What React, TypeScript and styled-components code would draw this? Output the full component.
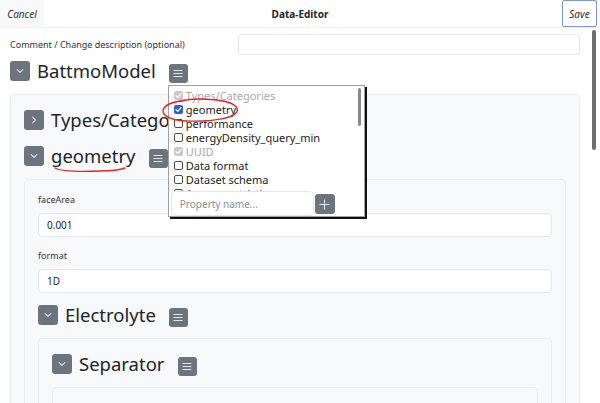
import React from "react";
import styled, { createGlobalStyle, css } from "styled-components";

const FONT = `"Noto Sans", "Open Sans", "Liberation Sans", sans-serif`;

const GlobalStyle = createGlobalStyle`
  html, body { margin: 0; padding: 0; background: #fff; }
  body { font-family: ${FONT}; color: #212529; overflow: hidden; }
  *, *::before, *::after { box-sizing: border-box; }
`;

const Page = styled.div`
  position: relative;
  width: 600px;
  height: 403px;
  overflow: hidden;
  display: flex;
  flex-direction: column;
  background: #fff;
`;

const Header = styled.header`
  flex: none;
  height: 28px;
  display: grid;
  grid-template-columns: 1fr auto 1fr;
  align-items: start;
  border-bottom: 1px solid #eef0f2;
`;

const HeaderButton = styled.button<{ $kind: "cancel" | "save" }>`
  font-family: ${FONT};
  font-style: italic;
  font-size: 10px;
  color: #333;
  padding: 0;
  height: 27px;
  cursor: pointer;
  ${({ $kind }) =>
    $kind === "cancel"
      ? css`
          justify-self: start;
          width: 44px;
          background: #f8f9fa;
          border: none;
        `
      : css`
          justify-self: end;
          width: 35px;
          margin-right: 3px;
          background: #fff;
          border: 1px solid #7b96de;
          border-radius: 2px;
        `}
`;

const Title = styled.div`
  align-self: center;
  font-size: 10px;
  font-weight: 700;
  color: #212529;
`;

const Main = styled.div`
  flex: 1;
  min-height: 0;
  display: flex;
`;

const Content = styled.div`
  flex: 1;
  min-width: 0;
  padding: 6px 10px 0 10px;
  overflow: hidden;
`;

const ScrollTrack = styled.div`
  flex: none;
  width: 10px;
  padding: 2px 0 0 2px;
`;

const ScrollThumb = styled.div<{ $h: number; $w: number }>`
  width: ${(p) => p.$w}px;
  height: ${(p) => p.$h}px;
  background: #6d6d6d;
  border-radius: 2px;
`;

const CommentRow = styled.div`
  display: flex;
  align-items: center;
  justify-content: space-between;
  height: 21px;
  margin-bottom: 6px;
`;

const SmallLabel = styled.label`
  display: block;
  font-size: 9px;
  line-height: 10px;
  color: #333;
`;

const TextInput = styled.input<{ $w?: number; $h: number }>`
  display: block;
  width: ${(p) => (p.$w ? `${p.$w}px` : "100%")};
  height: ${(p) => p.$h}px;
  border: 1px solid #e4e7ea;
  border-radius: 4px;
  background: #fff;
  padding: 0 8px;
  font-family: ${FONT};
  font-size: 10px;
  color: #212529;
  outline: none;
  &::placeholder {
    color: #8a8f94;
  }
`;

const Field = styled.div<{ $last?: boolean }>`
  margin-bottom: ${(p) => (p.$last ? 12 : 14)}px;
  ${SmallLabel} {
    margin-bottom: 8px;
  }
`;

const Section = styled.section`
  & + & {
    margin-top: 16px;
  }
`;

const SectionHead = styled.div`
  display: flex;
  align-items: flex-start;
  gap: 7px;
  height: 20px;
`;

const SquareButton = styled.button<{ $size: number }>`
  flex: none;
  width: ${(p) => p.$size}px;
  height: ${(p) => p.$size}px;
  padding: 0;
  border: none;
  border-radius: 3px;
  background: #6c757d;
  display: flex;
  align-items: center;
  justify-content: center;
  cursor: pointer;
`;

const HeadTitle = styled.h3`
  margin: 0 6px 0 0;
  font-size: 18.5px;
  line-height: 20px;
  font-weight: 400;
  color: #212529;
  white-space: nowrap;
`;

const MenuAnchor = styled.div`
  position: relative;
  margin-top: 3px;
`;

const Card = styled.div`
  margin-top: 13px;
  background: #f8f9fa;
  border: 1px solid #eaecef;
  border-radius: 4px;
  padding: 15px 13px;
  min-height: 40px;
`;

const CardFiller = styled.div`
  height: 60px;
`;

/* dropdown */
const Dropdown = styled.div`
  position: absolute;
  top: calc(100% + 2px);
  left: -1px;
  z-index: 5;
  width: 197px;
  background: #fff;
  border: 1px solid #a0a0a0;
  box-shadow: 2px 2px 0 #111;
  display: flex;
  flex-direction: column;
`;

const OptionList = styled.div`
  display: flex;
  height: 105px;
  overflow: hidden;
`;

const Options = styled.ul`
  list-style: none;
  margin: 0;
  padding: 2px 0 0 5px;
  flex: 1;
  min-width: 0;
`;

const Option = styled.li<{ $disabled?: boolean }>`
  display: flex;
  align-items: center;
  gap: 3px;
  height: 14px;
  font-size: 11px;
  line-height: 13px;
  color: ${(p) => (p.$disabled ? "#a9a9a9" : "#222")};
  white-space: nowrap;
`;

const Check = styled.span<{ $state: "off" | "on" | "disabled" }>`
  flex: none;
  width: 9px;
  height: 9px;
  border-radius: 2px;
  display: flex;
  align-items: center;
  justify-content: center;
  ${({ $state }) =>
    $state === "off"
      ? css`
          background: #fff;
          border: 1px solid #4a4a4a;
        `
      : $state === "on"
      ? css`
          background: #2d5fd3;
        `
      : css`
          background: #c9c9c9;
        `}
`;

const ListScroll = styled.div`
  flex: none;
  width: 8px;
  padding: 2px 0 0 2px;
`;

const ListThumb = styled.div`
  width: 3px;
  height: 38px;
  background: #8a8a8a;
  border-radius: 2px;
`;

const DropFooter = styled.div`
  display: flex;
  align-items: flex-start;
  gap: 1px;
  padding-left: 2px;
  height: 25px;
`;

const Annotation = styled.svg`
  position: absolute;
  left: 0;
  top: 0;
  z-index: 20;
  pointer-events: none;
`;

const Chevron = ({ dir }: { dir: "down" | "right" }) => (
  <svg width="10" height="10" viewBox="0 0 10 10">
    <path
      d={dir === "down" ? "M2.2 3.6 L5 6.4 L7.8 3.6" : "M3.6 2.2 L6.4 5 L3.6 7.8"}
      fill="none"
      stroke="#dfe2e6"
      strokeWidth="1.1"
      strokeLinecap="round"
      strokeLinejoin="round"
    />
  </svg>
);

const Burger = () => (
  <svg width="10" height="9" viewBox="0 0 10 9">
    <path d="M0.5 1.5 H9.5 M0.5 4.5 H9.5 M0.5 7.5 H9.5" stroke="#e2e4e7" strokeWidth="1.2" />
  </svg>
);

const Plus = () => (
  <svg width="11" height="11" viewBox="0 0 11 11">
    <path d="M5.5 0.5 V10.5 M0.5 5.5 H10.5" stroke="#e8eaec" strokeWidth="1.1" />
  </svg>
);

const Tick = () => (
  <svg width="7" height="7" viewBox="0 0 7 7">
    <path d="M1 3.7 L2.8 5.4 L6 1.6" fill="none" stroke="#fff" strokeWidth="1.3" strokeLinecap="round" strokeLinejoin="round" />
  </svg>
);

type OptionItem = { label: string; state: "off" | "on" | "disabled" };

const options: OptionItem[] = [
  { label: "Types/Categories", state: "disabled" },
  { label: "geometry", state: "on" },
  { label: "performance", state: "off" },
  { label: "energyDensity_query_min", state: "off" },
  { label: "UUID", state: "disabled" },
  { label: "Data format", state: "off" },
  { label: "Dataset schema", state: "off" },
  { label: "Access restrictions", state: "off" },
];

const PropertyMenu = () => (
  <Dropdown>
    <OptionList>
      <Options>
        {options.map((o) => (
          <Option key={o.label} $disabled={o.state === "disabled"}>
            <Check $state={o.state}>{o.state !== "off" && <Tick />}</Check>
            {o.label}
          </Option>
        ))}
      </Options>
      <ListScroll>
        <ListThumb />
      </ListScroll>
    </OptionList>
    <DropFooter>
      <TextInput $w={143} $h={25} placeholder="Property name..." />
      <MenuAnchor>
        <SquareButton $size={20}>
          <Plus />
        </SquareButton>
      </MenuAnchor>
    </DropFooter>
  </Dropdown>
);

type SectionProps = {
  title: string;
  open: boolean;
  menuOpen?: boolean;
  children?: React.ReactNode;
};

const TreeSection = ({ title, open, menuOpen, children }: SectionProps) => (
  <Section>
    <SectionHead>
      <SquareButton $size={20}>
        <Chevron dir={open ? "down" : "right"} />
      </SquareButton>
      <HeadTitle>{title}</HeadTitle>
      <MenuAnchor>
        <SquareButton $size={19}>
          <Burger />
        </SquareButton>
        {menuOpen && <PropertyMenu />}
      </MenuAnchor>
    </SectionHead>
    {open && <Card>{children}</Card>}
  </Section>
);

const InputField = ({ label, value, last }: { label: string; value: string; last?: boolean }) => (
  <Field $last={last}>
    <SmallLabel>{label}</SmallLabel>
    <TextInput $h={24} defaultValue={value} />
  </Field>
);

export default function App() {
  return (
    <>
      <GlobalStyle />
      <Page>
        <Header>
          <HeaderButton $kind="cancel">Cancel</HeaderButton>
          <Title>Data-Editor</Title>
          <HeaderButton $kind="save">Save</HeaderButton>
        </Header>
        <Main>
          <Content>
            <CommentRow>
              <SmallLabel>Comment / Change description (optional)</SmallLabel>
              <TextInput $w={342} $h={21} />
            </CommentRow>
            <TreeSection title="BattmoModel" open menuOpen>
              <TreeSection title="Types/Categories" open={false} />
              <TreeSection title="geometry" open>
                <InputField label="faceArea" value="0.001" />
                <InputField label="format" value="1D" last />
                <TreeSection title="Electrolyte" open>
                  <TreeSection title="Separator" open>
                    <CardFiller />
                  </TreeSection>
                </TreeSection>
              </TreeSection>
            </TreeSection>
          </Content>
          <ScrollTrack>
            <ScrollThumb $w={4} $h={120} />
          </ScrollTrack>
        </Main>
        <Annotation width="600" height="403" viewBox="0 0 600 403">
          <path
            d="M172 103 C195 96, 232 99, 237 108 C241 118, 212 122, 186 121 C168 120, 160 114, 164 108 C167 104, 175 101, 183 101"
            fill="none"
            stroke="#e3262b"
            strokeWidth="1.4"
            strokeLinecap="round"
          />
          <path
            d="M55 168 C60 171, 75 172, 100 171 C112 171, 120 170, 125 168"
            fill="none"
            stroke="#e3262b"
            strokeWidth="1.4"
            strokeLinecap="round"
          />
        </Annotation>
      </Page>
    </>
  );
}
